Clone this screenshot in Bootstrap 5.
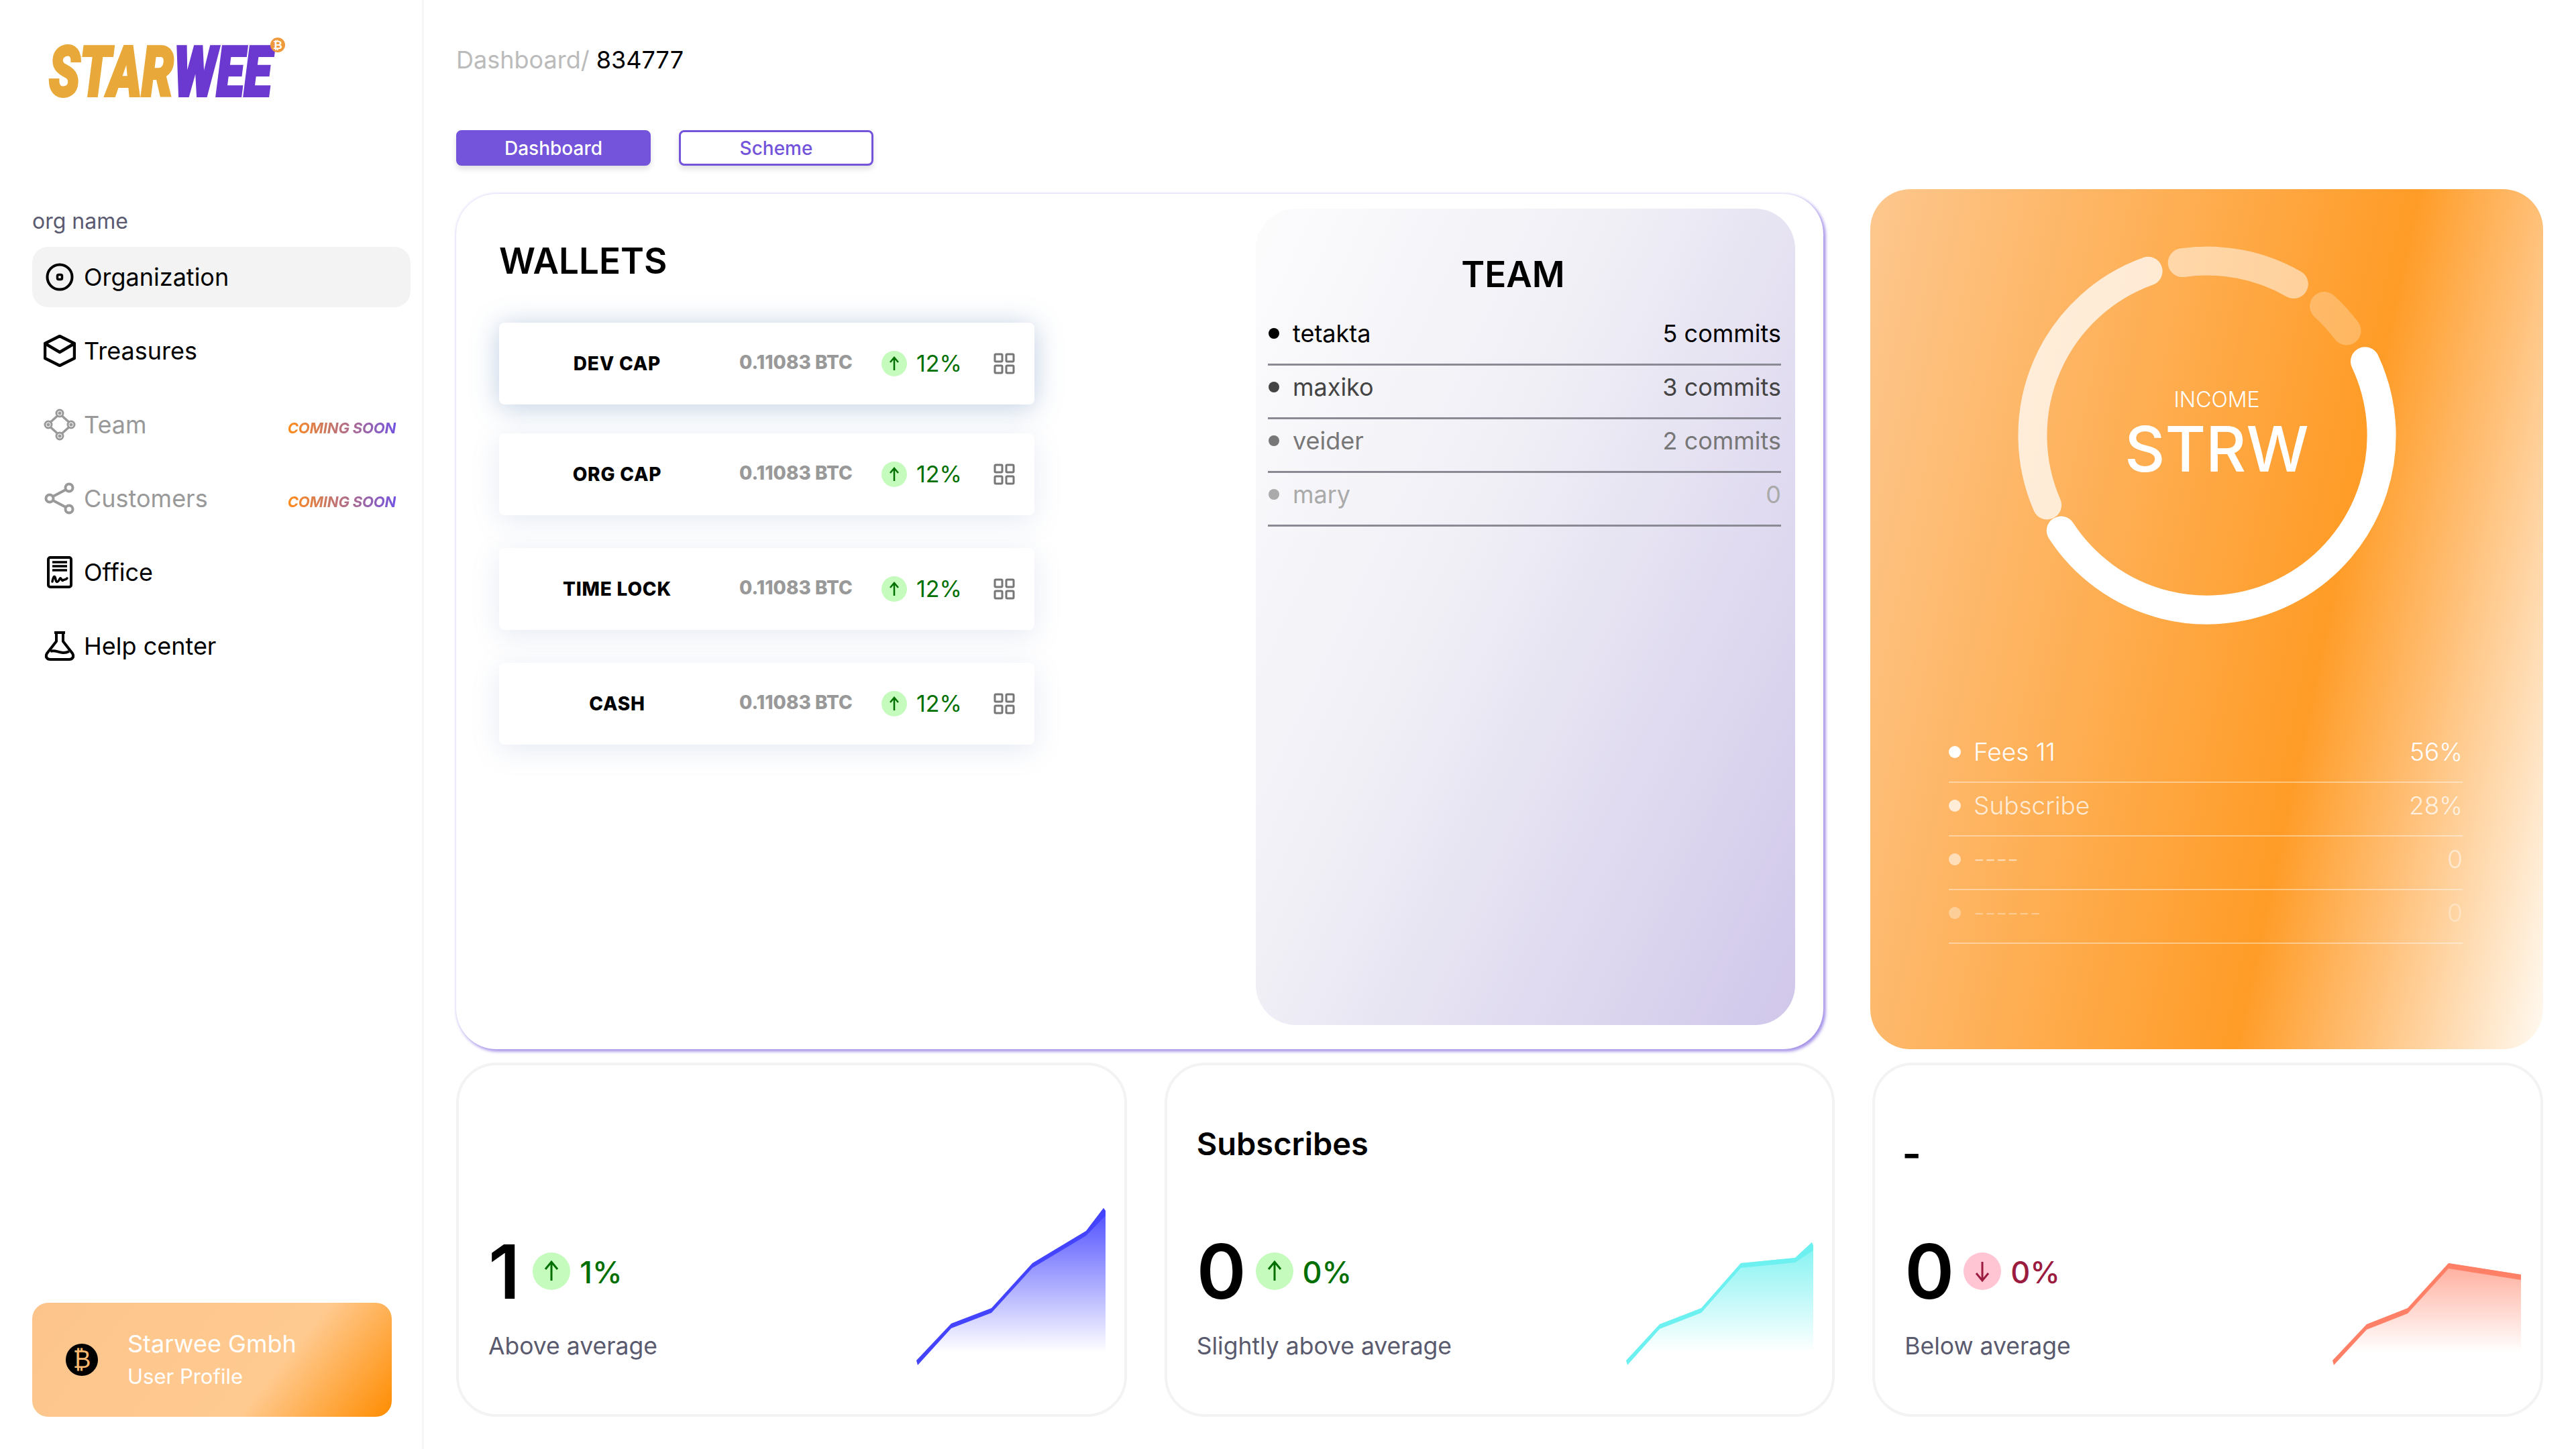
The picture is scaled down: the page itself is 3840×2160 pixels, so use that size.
<!DOCTYPE html>
<html lang="en">
<head>
  <meta charset="UTF-8">
  <title>Starwee - Dashboard</title>
  <link href="https://cdn.jsdelivr.net/npm/bootstrap@5.3.0/dist/css/bootstrap.min.css" rel="stylesheet">
  <style>
    body {
      font-family: "Inter", "Liberation Sans", sans-serif;
      color: #000;
      background: #fff;
      width: 3840px;
      height: 2160px;
      overflow: hidden;
    }

    /* sidebar */
    .side {
      width: 632px;
      height: 2160px;
      padding: 0 17px 48px 48px;
      border-right: 3px solid #f6f6f6;
    }
    .logo-box { height: 307px; padding: 33px 0 0 20px; }
    .logo-txt { font-family: "Roboto", "Liberation Sans", sans-serif; font-weight: 900; font-style: italic; font-size: 104px; }
    .coin-txt { font-family: "DejaVu Sans", sans-serif; font-size: 17px; font-weight: 700; }
    .org-name { font-size: 32px; line-height: 46px; color: #5a5a70; margin-bottom: 15px; }
    .side-link {
      height: 90px;
      padding: 0 22px 0 17px;
      gap: 12px;
      font-size: 36px;
      color: #000;
      border-radius: 24px;
      text-decoration: none;
    }
    .side-link svg { width: 48px; height: 48px; flex: none; }
    .side-link.on { background: #f3f3f3; }
    .side-link.off { color: #999; }
    .side-list { gap: 20px; }
    .soon {
      margin-left: auto;
      padding-top: 10px;
      font-size: 22px;
      font-weight: 700;
      font-style: italic;
      letter-spacing: -.2px;
      background: linear-gradient(90deg, #ff8c1a, #7354e0);
      -webkit-background-clip: text;
      background-clip: text;
      color: transparent;
    }
    .profile {
      width: 536px;
      height: 170px;
      padding-left: 50px;
      gap: 44px;
      border-radius: 24px;
      color: #fff;
      background: linear-gradient(129deg, #fcc48a 0%, #ffca90 66%, #ff8c00 100%);
    }
    .profile-ico { width: 48px; height: 48px; font-family: "DejaVu Sans", sans-serif; font-size: 36px; color: #fdb96f; background: #000; }
    .profile-name { font-size: 36px; line-height: 48px; }
    .profile-sub { font-size: 31px; line-height: 48px; margin-top: 1px; }

    /* main column */
    .main-col { padding: 0 49px 0 48px; }
    .crumbs { height: 194px; padding-top: 65px; font-size: 36px; line-height: 48px; color: #bbb; }
    .crumbs b { font-weight: 400; color: #000; }
    .tab-row { gap: 42px; height: 88px; }
    .tab-btn {
      width: 290px;
      height: 53px;
      padding: 0;
      font-size: 28px;
      font-weight: 500;
      border-radius: 8px;
      border: 3px solid #7354da;
      box-shadow: 0 5px 8px rgba(0, 0, 0, .12);
    }
    .tab-fill { background: #7354da; color: #fff; }
    .tab-line { background: #fff; color: #7354da; }

    .top-row { height: 1282px; gap: 70px; }
    .wallets {
      width: 2038px;
      height: 1275px;
      border-radius: 60px;
      box-shadow: 0 0 4px rgba(200, 190, 245, .7), 3px 3px 5px rgba(115, 84, 218, .75);
    }
    .wallets-left { padding: 65px 0 0 64px; width: 1192px; }
    .big-title { font-size: 53px; line-height: 70px; font-weight: 600; }
    .wallet-row {
      width: 798px;
      height: 122px;
      margin-top: 49px;
      border-radius: 8px;
      background: #fff;
      box-shadow: 0 8px 40px rgba(110, 140, 190, .18);
    }
    .wallet-row.first { margin-top: 57px; box-shadow: 0 4px 40px rgba(100, 135, 185, .42); }
    .wallet-row.tight { margin-top: 43px; }
    .w-name { width: 352px; text-align: center; font-size: 28px; font-weight: 800; letter-spacing: .8px; }
    .w-val { width: 218px; padding-left: 6px; font-size: 28px; font-weight: 800; color: #999; margin-top: -4px; }
    .w-pct { width: 129px; padding-left: 14px; font-size: 34px; color: #007000; margin-top: -2px; }
    .up-dot { width: 38px; height: 38px; background: #c5fbbd; flex: none; }
    .up-dot svg { width: 24px; height: 24px; }
    .grid-ico { width: 32px; height: 32px; flex: none; }

    .team-panel {
      width: 804px;
      height: 1217px;
      margin-top: 22px;
      padding: 63px 21px 0 18px;
      border-radius: 60px;
      background: linear-gradient(115deg, #fcfcfd 0%, #f0eff6 40%, #d0c7ea 100%);
    }
    .team-title { padding-right: 34px; margin-bottom: 21px; text-align: center; }
    .line-row { height: 80px; padding-bottom: 14px; font-size: 36px; border-bottom: 3px solid #8a8a94; }
    .dot { width: 16px; height: 16px; background: currentColor; flex: none; }
    .row-name { gap: 20px; margin-left: 1px; }
    .m1 { color: #000; }
    .m2 { color: #444; }
    .m3 { color: #777; }
    .m4 { color: #aaa; }

    .income {
      width: 1003px;
      height: 1282px;
      padding-top: 67px;
      border-radius: 60px;
      color: #fff;
      background: linear-gradient(102deg, #fdc78e 0%, #ff9c27 64%, #ffbe74 78%, #fffaf2 100%);
    }
    .ring-box { width: 600px; height: 600px; }
    .ring-txt { top: 222px; left: 30px; right: 0; text-align: center; }
    .ring-small { font-size: 32px; line-height: 50px; font-weight: 300; }
    .ring-big { font-size: 93px; line-height: 96px; font-weight: 500; }
    .fee-list { margin: 138px 120px 0 117px; }
    .fee-row { height: 80px; padding-bottom: 10px; font-size: 37px; font-weight: 300; border-bottom: 2px solid rgba(255, 255, 255, .4); }
    .fee-row .dot { width: 18px; height: 18px; }
    .fee-name { gap: 19px; }
    .f1 { color: #fff; }
    .f2 { color: rgba(255, 255, 255, .75); }
    .f3 { color: rgba(255, 255, 255, .55); }
    .f4 { color: rgba(255, 255, 255, .35); }

    /* bottom cards */
    .stat-row { margin-top: 20px; height: 528px; display: grid; grid-template-columns: repeat(3, 1fr); gap: 56px; }
    .stat-box {
      padding: 87px 27px 73px 44px;
      border: 4px solid #f3f3f3;
      border-radius: 60px;
    }
    .stat-title { font-size: 47px; line-height: 60px; font-weight: 600; }
    .dash-title { padding-top: 15px; margin-left: -4px; font-size: 62px; }
    .stat-num { font-size: 112px; line-height: 112px; font-weight: 600; gap: 14px; }
    .stat-num.narrow { gap: 19px; }
    .stat-pct { padding-top: 4px; font-size: 45px; font-weight: 500; color: #006f00; }
    .stat-num.narrow .stat-pct { margin-left: -5px; }
    .stat-pct.down { color: #9b1c3f; }
    .stat-dot { width: 56px; height: 56px; background: #c5fbbd; flex: none; }
    .stat-dot.down { background: #ffc5d3; }
    .stat-dot svg { width: 36px; height: 36px; }
    .stat-label { margin: 31px 0 5px; font-size: 35.5px; line-height: 46px; color: #5a5a6e; }
    .spark { width: 285px; height: 240px; flex: none; overflow: hidden; }
    .spark.pull { margin-right: -3px; }
  </style>
</head>
<body>
  <div class="d-flex">

    <!-- sidebar -->
    <aside class="side d-flex flex-column flex-shrink-0">
      <div class="logo-box">
        <svg width="380" height="142" viewBox="0 0 380 142">
          <text class="logo-txt" x="5" y="110" stroke-width="4" textLength="332" lengthAdjust="spacingAndGlyphs"><tspan fill="#e9a93a" stroke="#e9a93a">STAR</tspan><tspan fill="#6b38d0" stroke="#6b38d0">WEE</tspan></text>
          <circle cx="346" cy="34" r="11" fill="#ee9a3c"/>
          <text class="coin-txt" x="346" y="40" fill="#fff" text-anchor="middle">₿</text>
        </svg>
      </div>
      <div class="org-name">org name</div>
      <nav class="side-list d-flex flex-column">
        <a class="side-link on d-flex align-items-center" href="#">
          <svg viewBox="0 0 48 48" fill="none" stroke="#000" stroke-width="4"><circle cx="24" cy="24" r="18.500"/><rect x="20.500" y="20.500" width="7" height="7" rx="2" stroke-width="3.500"/></svg>
          Organization
        </a>
        <a class="side-link d-flex align-items-center" href="#">
          <svg viewBox="0 0 48 48" fill="none" stroke="#000" stroke-width="4.500" stroke-linejoin="round"><path d="M24 2 46 13V35L24 46 2 35V13Z"/><path d="M2 13 24 26 46 13"/></svg>
          Treasures
        </a>
        <a class="side-link off d-flex align-items-center" href="#">
          <svg viewBox="0 0 48 48" fill="none" stroke="#999" stroke-width="3"><circle cx="24" cy="7" r="5"/><circle cx="7" cy="24" r="5"/><circle cx="41" cy="24" r="5"/><circle cx="24" cy="41" r="5"/><circle cx="24" cy="7" r="1" fill="#999"/><circle cx="7" cy="24" r="1" fill="#999"/><circle cx="41" cy="24" r="1" fill="#999"/><circle cx="24" cy="41" r="1" fill="#999"/><path stroke-width="3.500" d="M27.500 11 37.500 20M20.500 11 10.500 20M10.500 28 20.500 37M37.500 28 27.500 37"/></svg>
          Team
          <span class="soon">COMING SOON</span>
        </a>
        <a class="side-link off d-flex align-items-center" href="#">
          <svg viewBox="0 0 48 48" fill="none" stroke="#999" stroke-width="4"><circle cx="38" cy="8" r="5.500"/><circle cx="9" cy="24" r="5.500"/><circle cx="38" cy="40" r="5.500"/><path d="M14 21 33 11M14 27 33 37"/></svg>
          Customers
          <span class="soon">COMING SOON</span>
        </a>
        <a class="side-link d-flex align-items-center" href="#">
          <svg viewBox="0 0 48 48" fill="none" stroke="#000" stroke-width="3.500"><rect x="7" y="2" width="34" height="44" rx="3" stroke-width="4"/><path d="M13 9H35M13 15H35M13 21H35"/><path stroke-linecap="round" d="M13 38C15 28 17 29 18 35S22 38 24 34 27 38 29 36 33 36 35 33"/></svg>
          Office
        </a>
        <a class="side-link d-flex align-items-center" href="#">
          <svg viewBox="0 0 48 48" fill="none" stroke="#000" stroke-width="4" stroke-linejoin="round"><path d="M16 4H32M19 4V17L5 35C2 40 5 44 10 44H38C43 44 46 40 43 35L29 17V4"/><path d="M10 32C18 28 26 38 38 32"/></svg>
          Help center
        </a>
      </nav>
      <div class="profile d-flex align-items-center mt-auto">
        <span class="profile-ico rounded-circle d-flex align-items-center justify-content-center">₿</span>
        <div>
          <div class="profile-name">Starwee Gmbh</div>
          <div class="profile-sub">User Profile</div>
        </div>
      </div>
    </aside>

    <!-- main -->
    <main class="main-col flex-grow-1">
      <div class="crumbs">Dashboard/ <b>834777</b></div>
      <div class="tab-row d-flex">
        <button class="btn tab-btn tab-fill" type="button">Dashboard</button>
        <button class="btn tab-btn tab-line" type="button">Scheme</button>
      </div>

      <div class="top-row d-flex align-items-end">
        <section class="wallets d-flex">
          <div class="wallets-left">
            <div class="big-title">WALLETS</div>

            <div class="wallet-row first d-flex align-items-center">
              <div class="w-name">DEV CAP</div>
              <div class="w-val">0.11083 BTC</div>
              <span class="up-dot rounded-circle d-flex align-items-center justify-content-center"><svg viewBox="0 0 24 24" fill="none" stroke="#007000" stroke-width="2.500"><path d="M12 22V4M6 10 12 3 18 10"/></svg></span>
              <div class="w-pct">12%</div>
              <svg class="grid-ico" viewBox="0 0 32 32" fill="none" stroke="#777" stroke-width="3"><rect x="2" y="2" width="11" height="11" rx="1.500"/><rect x="19" y="2" width="11" height="11" rx="1.500"/><rect x="2" y="19" width="11" height="11" rx="1.500"/><rect x="19" y="19" width="11" height="11" rx="1.500"/></svg>
            </div>

            <div class="wallet-row tight d-flex align-items-center">
              <div class="w-name">ORG CAP</div>
              <div class="w-val">0.11083 BTC</div>
              <span class="up-dot rounded-circle d-flex align-items-center justify-content-center"><svg viewBox="0 0 24 24" fill="none" stroke="#007000" stroke-width="2.500"><path d="M12 22V4M6 10 12 3 18 10"/></svg></span>
              <div class="w-pct">12%</div>
              <svg class="grid-ico" viewBox="0 0 32 32" fill="none" stroke="#777" stroke-width="3"><rect x="2" y="2" width="11" height="11" rx="1.500"/><rect x="19" y="2" width="11" height="11" rx="1.500"/><rect x="2" y="19" width="11" height="11" rx="1.500"/><rect x="19" y="19" width="11" height="11" rx="1.500"/></svg>
            </div>

            <div class="wallet-row d-flex align-items-center">
              <div class="w-name">TIME LOCK</div>
              <div class="w-val">0.11083 BTC</div>
              <span class="up-dot rounded-circle d-flex align-items-center justify-content-center"><svg viewBox="0 0 24 24" fill="none" stroke="#007000" stroke-width="2.500"><path d="M12 22V4M6 10 12 3 18 10"/></svg></span>
              <div class="w-pct">12%</div>
              <svg class="grid-ico" viewBox="0 0 32 32" fill="none" stroke="#777" stroke-width="3"><rect x="2" y="2" width="11" height="11" rx="1.500"/><rect x="19" y="2" width="11" height="11" rx="1.500"/><rect x="2" y="19" width="11" height="11" rx="1.500"/><rect x="19" y="19" width="11" height="11" rx="1.500"/></svg>
            </div>

            <div class="wallet-row d-flex align-items-center">
              <div class="w-name">CASH</div>
              <div class="w-val">0.11083 BTC</div>
              <span class="up-dot rounded-circle d-flex align-items-center justify-content-center"><svg viewBox="0 0 24 24" fill="none" stroke="#007000" stroke-width="2.500"><path d="M12 22V4M6 10 12 3 18 10"/></svg></span>
              <div class="w-pct">12%</div>
              <svg class="grid-ico" viewBox="0 0 32 32" fill="none" stroke="#777" stroke-width="3"><rect x="2" y="2" width="11" height="11" rx="1.500"/><rect x="19" y="2" width="11" height="11" rx="1.500"/><rect x="2" y="19" width="11" height="11" rx="1.500"/><rect x="19" y="19" width="11" height="11" rx="1.500"/></svg>
            </div>
          </div>

          <div class="team-panel">
            <div class="big-title team-title">TEAM</div>
            <div class="line-row m1 d-flex align-items-center justify-content-between"><span class="row-name d-flex align-items-center"><i class="dot rounded-circle"></i>tetakta</span><span>5 commits</span></div>
            <div class="line-row m2 d-flex align-items-center justify-content-between"><span class="row-name d-flex align-items-center"><i class="dot rounded-circle"></i>maxiko</span><span>3 commits</span></div>
            <div class="line-row m3 d-flex align-items-center justify-content-between"><span class="row-name d-flex align-items-center"><i class="dot rounded-circle"></i>veider</span><span>2 commits</span></div>
            <div class="line-row m4 d-flex align-items-center justify-content-between"><span class="row-name d-flex align-items-center"><i class="dot rounded-circle"></i>mary</span><span>0</span></div>
          </div>
        </section>

        <section class="income">
          <div class="ring-box position-relative mx-auto">
            <svg width="600" height="600" viewBox="0 0 600 600" fill="none" stroke="#fff" stroke-width="43" stroke-linecap="round">
              <path d="M535.500 189.700A260 260 0 0 1 82.300 442.100"/>
              <path stroke-opacity=".75" d="M61.600 403.900A260 260 0 0 1 212.100 55.300"/>
              <path stroke-opacity=".5" d="M263.200 42.600A260 260 0 0 1 429.300 74.500"/>
              <path stroke-opacity=".25" d="M474.700 107.500A260 260 0 0 1 508 144"/>
            </svg>
            <div class="ring-txt position-absolute">
              <div class="ring-small">INCOME</div>
              <div class="ring-big">STRW</div>
            </div>
          </div>
          <div class="fee-list">
            <div class="fee-row f1 d-flex align-items-center justify-content-between"><span class="fee-name d-flex align-items-center"><i class="dot rounded-circle"></i>Fees 11</span><span>56%</span></div>
            <div class="fee-row f2 d-flex align-items-center justify-content-between"><span class="fee-name d-flex align-items-center"><i class="dot rounded-circle"></i>Subscribe</span><span>28%</span></div>
            <div class="fee-row f3 d-flex align-items-center justify-content-between"><span class="fee-name d-flex align-items-center"><i class="dot rounded-circle"></i>----</span><span>0</span></div>
            <div class="fee-row f4 d-flex align-items-center justify-content-between"><span class="fee-name d-flex align-items-center"><i class="dot rounded-circle"></i>------</span><span>0</span></div>
          </div>
        </section>
      </div>

      <div class="stat-row">
        <section class="stat-box d-flex flex-column">
          <div class="d-flex align-items-end justify-content-between mt-auto">
            <div>
              <div class="stat-num narrow d-flex align-items-center">1
                <span class="stat-dot rounded-circle d-flex align-items-center justify-content-center"><svg viewBox="0 0 36 36" fill="none" stroke="#006f00" stroke-width="3"><path d="M18 32V5M9 15 18 4 27 15"/></svg></span>
                <span class="stat-pct">1%</span>
              </div>
              <div class="stat-label">Above average</div>
            </div>
            <svg class="spark" viewBox="0 0 285 240">
              <defs><linearGradient id="g1" gradientUnits="userSpaceOnUse" x1="0" y1="6" x2="0" y2="221"><stop offset="0" stop-color="#4444ff" stop-opacity=".95"/><stop offset="1" stop-color="#4444ff" stop-opacity="0"/></linearGradient></defs>
              <polygon fill="url(#g1)" points="13,221 54,178 114,155 175,88 255,40 281,6 284,10 284,221"/>
              <polygon fill="#4444ff" points="2,233 54,178 114,155 175,88 255,40 281,6 284,10 284,17 255,47 175,95 114,162 54,185 4,240"/>
            </svg>
          </div>
        </section>

        <section class="stat-box d-flex flex-column">
          <div class="stat-title">Subscribes</div>
          <div class="d-flex align-items-end justify-content-between mt-auto">
            <div>
              <div class="stat-num d-flex align-items-center">0
                <span class="stat-dot rounded-circle d-flex align-items-center justify-content-center"><svg viewBox="0 0 36 36" fill="none" stroke="#006f00" stroke-width="3"><path d="M18 32V5M9 15 18 4 27 15"/></svg></span>
                <span class="stat-pct">0%</span>
              </div>
              <div class="stat-label">Slightly above average</div>
            </div>
            <svg class="spark pull" viewBox="0 0 285 240">
              <defs><linearGradient id="g2" gradientUnits="userSpaceOnUse" x1="0" y1="57" x2="0" y2="221"><stop offset="0" stop-color="#6cf0f0" stop-opacity=".85"/><stop offset="1" stop-color="#6cf0f0" stop-opacity="0"/></linearGradient></defs>
              <polygon fill="url(#g2)" points="13,221 52,179 114,155 173,88 254,80 279,57 281,62 281,221"/>
              <polygon fill="#6cf0f0" points="2,233 52,179 114,155 173,88 254,80 279,57 281,62 281,69 254,87 173,95 114,162 52,186 4,240"/>
            </svg>
          </div>
        </section>

        <section class="stat-box d-flex flex-column">
          <div class="stat-title dash-title">-</div>
          <div class="d-flex align-items-end justify-content-between mt-auto">
            <div>
              <div class="stat-num d-flex align-items-center">0
                <span class="stat-dot down rounded-circle d-flex align-items-center justify-content-center"><svg viewBox="0 0 36 36" fill="none" stroke="#9b1c3f" stroke-width="3"><path d="M18 4V31M9 21 18 32 27 21"/></svg></span>
                <span class="stat-pct down">0%</span>
              </div>
              <div class="stat-label">Below average</div>
            </div>
            <svg class="spark" viewBox="0 0 285 240">
              <defs><linearGradient id="g3" gradientUnits="userSpaceOnUse" x1="0" y1="88" x2="0" y2="221"><stop offset="0" stop-color="#ff8066" stop-opacity=".65"/><stop offset="1" stop-color="#ff8066" stop-opacity="0"/></linearGradient></defs>
              <polygon fill="url(#g3)" points="13,221 53,179 114,155 175,88 283,105 283,221"/>
              <polygon fill="#ff8066" points="2,233 53,179 114,155 175,88 283,105 283,113 175,96 114,163 53,187 4,240"/>
            </svg>
          </div>
        </section>
      </div>
    </main>
  </div>

  <script src="https://cdn.jsdelivr.net/npm/bootstrap@5.3.0/dist/js/bootstrap.bundle.min.js"></script>
</body>
</html>
